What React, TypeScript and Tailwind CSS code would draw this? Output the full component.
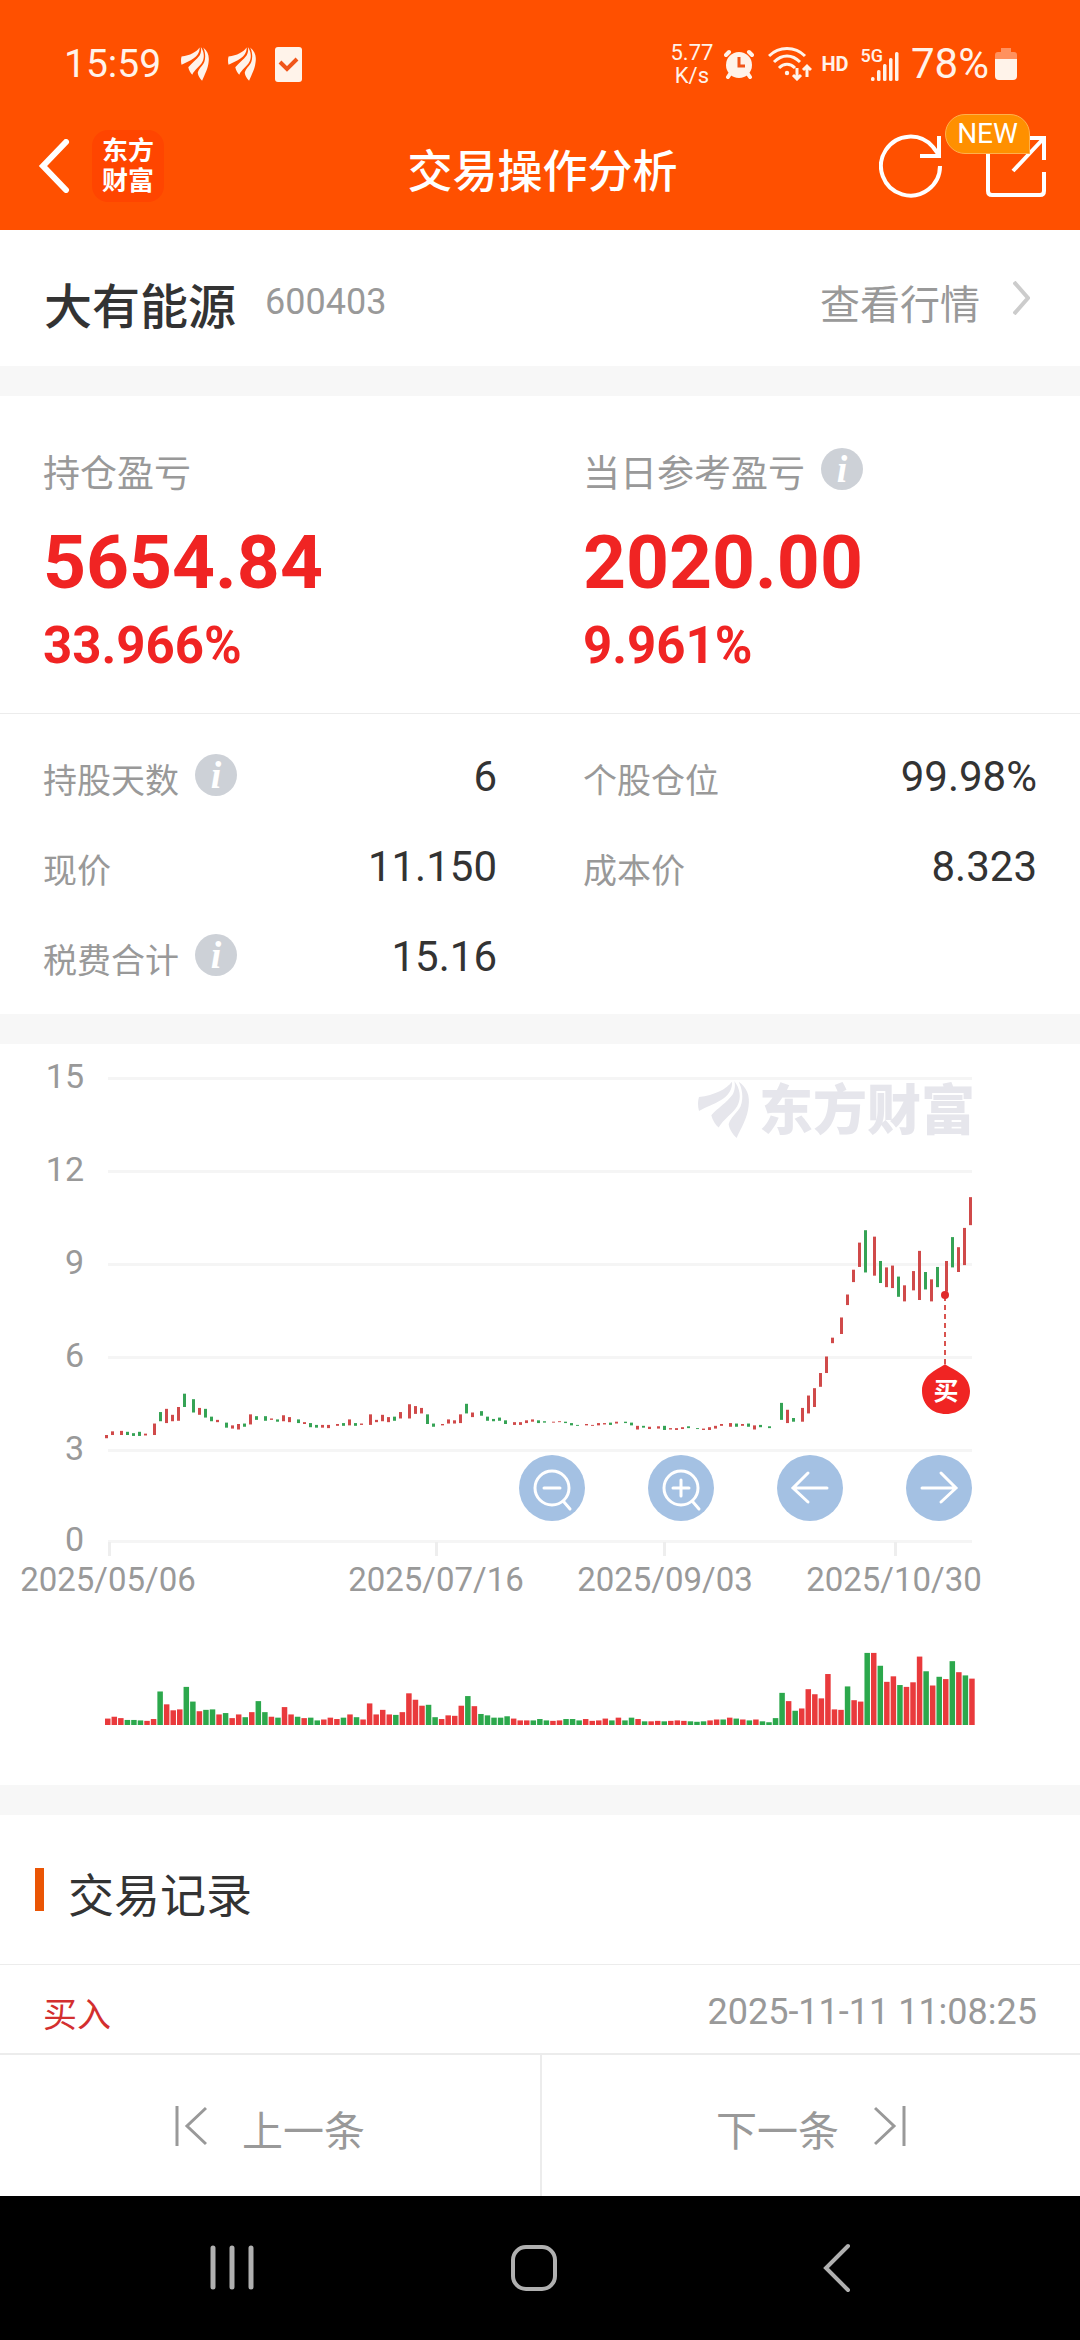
import type { ReactNode } from "react";

type Side = "r" | "g";
// price colour, top, bottom, volume, volume colour when it differs
type Bar = [Side, number, number, number, Side?];

const BARS: Bar[] = [
  ["r", 882, 889, 14], ["r", 874, 882, 18], ["r", 873, 882, 15], ["g", 875, 882, 11],
  ["g", 878, 884, 11], ["g", 875, 884, 10], ["r", 879, 883, 9], ["r", 857, 882, 13],
  ["g", 832, 852, 73], ["r", 825, 856, 45], ["r", 838, 852, 32], ["r", 821, 851, 34],
  ["g", 792, 821, 83], ["g", 804, 833, 51], ["r", 823, 838, 30], ["g", 825, 844, 33],
  ["g", 842, 852, 34], ["r", 849, 854, 23], ["g", 855, 866, 26], ["r", 861, 868, 15],
  ["r", 858, 870, 23], ["g", 857, 864, 17], ["r", 837, 859, 28], ["g", 841, 849, 52],
  ["g", 841, 851, 28], ["r", 846, 849, 18], ["g", 848, 853, 16], ["r", 839, 852, 39],
  ["r", 843, 854, 23], ["g", 848, 856, 18], ["r", 854, 858, 15], ["g", 856, 865, 16],
  ["g", 860, 866, 10], ["r", 860, 866, 12], ["r", 860, 867, 16], ["r", 858, 862, 13],
  ["g", 856, 862, 16], ["r", 848, 861, 23], ["g", 856, 862, 17], ["r", 857, 860, 12],
  ["r", 837, 860, 47], ["r", 849, 854, 23], ["r", 838, 852, 33], ["r", 843, 854, 23],
  ["g", 842, 851, 22], ["r", 832, 846, 28], ["r", 815, 846, 69], ["r", 819, 836, 55],
  ["r", 823, 835, 42], ["g", 837, 858, 44], ["g", 857, 864, 17], ["r", 858, 861, 13],
  ["r", 848, 857, 21], ["r", 850, 857, 20], ["r", 837, 856, 42], ["g", 814, 835, 63],
  ["r", 833, 843, 41], ["g", 830, 840, 24], ["g", 842, 851, 21], ["g", 847, 852, 16],
  ["g", 844, 851, 16], ["g", 850, 858, 19], ["r", 854, 860, 14], ["r", 854, 860, 10],
  ["r", 850, 856, 10], ["r", 848, 853, 10, "g"], ["g", 850, 856, 13], ["g", 852, 855, 10],
  ["r", 853, 855, 9], ["r", 852, 854, 10], ["g", 853, 856, 13], ["g", 856, 861, 13],
  ["g", 860, 862, 10], ["r", 858, 861, 13], ["r", 860, 862, 9], ["r", 856, 861, 10],
  ["r", 856, 859, 14], ["g", 855, 860, 10], ["r", 853, 857, 16], ["g", 853, 856, 10],
  ["g", 855, 861, 16], ["r", 862, 870, 13], ["g", 862, 866, 8], ["r", 864, 869, 8],
  ["r", 863, 868, 9], ["g", 862, 871, 8], ["r", 867, 870, 9], ["r", 867, 871, 10],
  ["r", 865, 869, 9], ["g", 863, 867, 8], ["g", 867, 869, 7], ["r", 868, 871, 8, "g"],
  ["r", 865, 871, 10], ["r", 862, 868, 12], ["r", 858, 862, 12, "g"], ["r", 856, 864, 16],
  ["g", 857, 864, 14], ["r", 858, 862, 12], ["g", 857, 864, 10], ["r", 861, 870, 12],
  ["g", 860, 865, 8], ["g", 863, 867, 6], ["g", 864, 864, 15], ["g", 812, 849, 70],
  ["r", 827, 856, 52], ["g", 845, 853, 31], ["r", 823, 853, 36], ["r", 796, 835, 78],
  ["r", 780, 821, 67], ["r", 747, 777, 58], ["r", 711, 747, 111], ["r", 670, 682, 34],
  ["r", 626, 662, 33], ["r", 576, 599, 84, "g"], ["r", 522, 549, 54], ["r", 463, 516, 51],
  ["g", 436, 528, 157], ["r", 450, 535, 157], ["g", 503, 551, 129], ["r", 517, 560, 94],
  ["r", 513, 562, 106], ["g", 537, 581, 87], ["r", 556, 591, 83], ["r", 525, 567, 93],
  ["r", 481, 588, 149], ["g", 527, 565, 117], ["r", 543, 591, 86], ["g", 516, 560, 105],
  ["r", 503, 570, 100], ["g", 451, 517, 139], ["r", 473, 527, 115], ["r", 431, 512, 108, "g"],
  ["r", 364, 425, 101],
];

const UNIT = 0.4592;
const priceY = (v: number) => v * UNIT - 14;
const candleX = (i: number) => 105 + 3 * Math.floor(i * 2.1818 + 0.78);
const volumeX = (i: number) => 105 + i * 6.547;

const GRID = [
  { label: "15", y: 34 },
  { label: "12", y: 127 },
  { label: "9", y: 220 },
  { label: "6", y: 313 },
  { label: "3", y: 406 },
  { label: "0", y: 497 },
];

const DATES = [
  { label: "2025/05/06", x: 108, tick: 110 },
  { label: "2025/07/16", x: 436, tick: 437 },
  { label: "2025/09/03", x: 665, tick: 665 },
  { label: "2025/10/30", x: 894, tick: 896 },
];

const WingShape = () => (
  <>
    <path d="M3 48 C50 42 85 25 102 2 C105 20 92 45 68 58 C50 70 25 78 3 90 C-1 75 -1 60 3 48 Z" />
    <path d="M40 103 C60 80 85 66 103 42 C112 28 112 10 109 0 C125 20 132 50 118 75 C105 98 75 115 62 140 C52 132 44 118 40 103 Z" />
    <path d="M92 130 C100 105 118 97 128 76 C138 50 132 20 122 2 C148 20 156 45 152 75 C149 110 130 140 116 171 C104 160 94 145 92 130 Z" />
  </>
);

const Wing = () => (
  <svg viewBox="0 0 154 172" className="h-[34px] w-[28px]" preserveAspectRatio="none" fill="#fff3ea">
    <WingShape />
  </svg>
);

const StatusBar = () => (
  <div className="flex h-[115px] items-center justify-between pt-[13px] pr-[63px] pl-[64px] text-[#fff3ea]">
    <div className="flex items-center">
      <span className="text-[39px] leading-none">15:59</span>
      <div className="ml-5 flex items-center gap-[19px]">
        <Wing />
        <Wing />
        <svg viewBox="0 0 27 35" className="h-[35px] w-[27px]">
          <rect width="27" height="35" rx="3" fill="#fff3ea" />
          <path d="M5 15 L12 22 L22 12" fill="none" stroke="#f0551a" strokeWidth="4" />
        </svg>
      </div>
    </div>
    <div className="flex items-center">
      <div className="text-center text-[22px] leading-[23px]">
        <div>5.77</div>
        <div>K/s</div>
      </div>
      <svg viewBox="0 0 30 30" className="ml-[11px] h-[30px] w-[30px]">
        <circle cx="15" cy="16" r="13" fill="currentColor" />
        <g fill="none" stroke="currentColor" strokeWidth="4" strokeLinecap="round">
          <path d="M2 6 L5 3 M28 6 L25 3 M6 25 L4 28 M24 25 L26 28" />
        </g>
        <path d="M15 8 V17 H21" fill="none" stroke="#f0551a" strokeWidth="3" />
      </svg>
      <svg viewBox="0 0 44 34" className="ml-[14px] h-[34px] w-[44px]" fill="none" stroke="currentColor">
        <path d="M1 9 C11 -1 27 -1 37 9 M6 15 C14 7 24 7 32 15 M11 21 C16 16 22 16 27 21" strokeWidth="3" />
        <circle cx="19" cy="26" r="2.2" fill="currentColor" stroke="none" />
        <path d="M29 21 V32 M25 28 L29 32 L33 28 M39 30 V19 M35 23 L39 19 L43 23" strokeWidth="3" />
      </svg>
      <span className="ml-[9px] text-[20px] leading-none font-bold">HD</span>
      <div className="ml-[12px] flex h-[34px] items-start">
        <span className="-mr-3 text-[18px] leading-[18px] font-medium">5G</span>
        <svg viewBox="0 0 28 34" className="h-[34px] w-[28px]" fill="currentColor">
          <rect x="0" y="30" width="3.5" height="4" rx="1.5" />
          <rect x="6" y="23" width="3.5" height="11" rx="1.5" />
          <rect x="12" y="17" width="3.5" height="17" rx="1.5" />
          <rect x="18" y="11" width="3.5" height="23" rx="1.5" />
          <rect x="24" y="5" width="3.5" height="29" rx="1.5" />
        </svg>
      </div>
      <span className="ml-3 text-[42px] leading-none">78%</span>
      <svg viewBox="0 0 22 32" className="ml-1.5 h-[32px] w-[22px]" fill="currentColor">
        <path d="M6 0 H16 V4 H19 Q22 4 22 7 V11 H0 V7 Q0 4 3 4 H6 Z" opacity="0.4" />
        <path d="M0 11 H22 V28 Q22 32 18 32 H4 Q0 32 0 28 Z" />
      </svg>
    </div>
  </div>
);

const NavBar = () => (
  <div className="grid h-[115px] grid-cols-[1fr_auto_1fr] items-center pr-[33px] pb-[14px] pl-[38px]">
    <div className="flex items-center gap-[22px]">
      <button type="button" aria-label="返回">
        <svg viewBox="0 0 32 54" className="h-[54px] w-[32px]" fill="none" stroke="#fff" strokeWidth="6">
          <path d="M28 3 L5 27 L28 51" strokeLinecap="round" />
        </svg>
      </button>
      <button
        type="button"
        className="h-[72px] w-[72px] rounded-2xl bg-[#ff4500] text-[26px] leading-[30px] font-bold text-white"
      >
        东方
        <br />
        财富
      </button>
    </div>
    <h1 className="pt-[14px] text-[45px] font-medium text-white">交易操作分析</h1>
    <div className="flex items-center justify-end gap-[42px]">
      <button type="button" aria-label="刷新">
        <svg viewBox="0 0 64 64" className="h-[64px] w-[64px]" fill="none" stroke="#fff" strokeWidth="4">
          <path d="M61 32 A29.5 29.5 0 1 1 54 13 L60 21" />
          <path d="M60 2 V22 H41" />
        </svg>
      </button>
      <button type="button" aria-label="分享" className="relative">
        <svg viewBox="0 0 62 64" className="h-[64px] w-[62px]" fill="none" stroke="#fff" strokeWidth="4">
          <path d="M3 12 V57 Q3 61 7 61 H55 Q59 61 59 57 V38" />
          <path d="M36 4 H59 V26 M59 4 L28 37" />
        </svg>
        <span className="absolute -top-[20px] -left-[40px] flex h-[40px] w-[85px] items-center justify-center rounded-[20px] rounded-br-none border border-[#ffb04d] bg-[#ff9000] text-[28px] text-white">
          NEW
        </span>
      </button>
    </div>
  </div>
);

const InfoButton = ({ label }: { label: string }) => (
  <button
    type="button"
    aria-label={`${label}说明`}
    className="mb-[12px] ml-4 flex h-[42px] w-[42px] items-center justify-center rounded-full bg-[#cdd1d7] font-['Liberation_Serif'] text-[38px] leading-none font-bold text-white italic"
  >
    i
  </button>
);

interface ProfitProps {
  label: string;
  amount: string;
  rate: string;
  info?: boolean;
}

const Profit = ({ label, amount, rate, info }: ProfitProps) => (
  <div className="px-[43px]">
    <div className="flex h-[52px] items-center text-[37px] text-[#999]">
      {label}
      {info && <InfoButton label={label} />}
    </div>
    <div className="mt-4 text-[75px] leading-[90px] font-bold">{amount}</div>
    <div className="mt-[9px] text-[51px] leading-[60px] font-bold">{rate}</div>
  </div>
);

interface StatProps {
  label: string;
  value: string;
  info?: boolean;
}

const Stat = ({ label, value, info }: StatProps) => (
  <div className="flex h-[90px] items-center justify-between px-[43px]">
    <dt className="flex h-[52px] items-center pt-2 text-[34px] text-[#999]">
      {label}
      {info && <InfoButton label={label} />}
    </dt>
    <dd className="pb-0.5 text-[42px] text-[#333]">{value}</dd>
  </div>
);

const RoundButton = ({ label, children }: { label: string; children: ReactNode }) => (
  <button type="button" aria-label={label} className="h-[66px] w-[66px] rounded-full bg-[#a4c1e3]">
    <svg viewBox="0 0 66 66" className="h-full w-full" fill="none" stroke="#fff" strokeWidth="3" strokeLinecap="round">
      {children}
    </svg>
  </button>
);

const PriceChart = () => (
  <section className="relative">
    <svg viewBox="0 0 1080 741" className="block h-auto w-full">
      {GRID.map((line) => (
        <g key={line.label}>
          <rect x="108" y={line.y - 1} width="864" height="3" fill="#f5f5f5" />
          <text x="84" y={line.y + 10} textAnchor="end" fontSize="34" fill="#999">
            {line.label}
          </text>
        </g>
      ))}
      {DATES.map((d) => (
        <g key={d.label}>
          <rect x={d.tick - 2} y="498" width="3" height="14" fill="#eee" />
          <text x={d.x} y="547" textAnchor="middle" fontSize="33" fill="#999">
            {d.label}
          </text>
        </g>
      ))}

      <g fill="#e6e6ec">
        <g transform="translate(698 37) scale(0.333)">
          <WingShape />
        </g>
        <text x="759" y="86" fontSize="54" fontWeight="900">
          东方财富
        </text>
      </g>

      {BARS.map(([side, top, bottom, volume, volumeSide], i) => (
        <g key={i}>
          <rect
            x={candleX(i)}
            y={priceY(top)}
            width="3"
            height={(bottom - top) * UNIT}
            fill={side === "r" ? "#d04a4a" : "#35a355"}
          />
          <rect
            x={volumeX(i)}
            y={681 - volume * UNIT}
            width="5.5"
            height={volume * UNIT}
            fill={(volumeSide ?? side) === "r" ? "#e93a3c" : "#2ca84c"}
          />
        </g>
      ))}

      <path d="M945 252 V320" stroke="#d9534f" strokeWidth="2" strokeDasharray="5 4" />
      <circle cx="945" cy="251" r="4" fill="#e02b2b" />
      <path
        d="M945 320 C950 325 970 329 970 347 C970 361 959 370 946 370 C933 370 922 361 922 347 C922 329 940 325 945 320 Z"
        fill="#f02423"
      />
      <text x="946" y="356" textAnchor="middle" fontSize="25" fontWeight="700" fill="#fff">
        买
      </text>
    </svg>

    <div className="absolute top-[411px] right-[10%] flex gap-[63px]">
      <RoundButton label="缩小">
        <circle cx="33" cy="33" r="17" />
        <path d="M25 33 H41 M45 47 L51 54" />
      </RoundButton>
      <RoundButton label="放大">
        <circle cx="33" cy="33" r="17" />
        <path d="M25 33 H41 M33 25 V41 M45 47 L51 54" />
      </RoundButton>
      <RoundButton label="左移">
        <path d="M16 33 H50 M31 18 L16 33 L31 47" />
      </RoundButton>
      <RoundButton label="右移">
        <path d="M16 33 H50 M35 18 L50 33 L35 47" />
      </RoundButton>
    </div>
  </section>
);

const Gap = () => <div className="h-[30px] bg-[#f7f7f7]" />;

export default function App() {
  return (
    <div className="min-h-screen bg-white font-[Roboto,'Noto_Sans_CJK_SC',sans-serif]">
      <header className="bg-[#ff5000]">
        <StatusBar />
        <NavBar />
      </header>

      <main>
        <section className="flex h-[136px] items-center justify-between pr-[50px] pl-[44px]">
          <div className="flex items-center gap-[29px]">
            <h2 className="pt-5 text-[48px] font-medium text-[#333]">大有能源</h2>
            <span className="pt-2 text-[36px] text-[#999]">600403</span>
          </div>
          <a href="#quote" className="flex items-center gap-[33px] text-[40px] text-[#999]">
            <span className="pt-4">查看行情</span>
            <svg viewBox="0 0 17 34" className="h-[34px] w-[17px]" fill="none" stroke="#ccc" strokeWidth="4">
              <path d="M1 1 L15 17 L1 33" />
            </svg>
          </a>
        </section>

        <Gap />

        <section className="grid grid-cols-2 border-b border-[#ececec] pt-[53px] pb-[37px] text-[#f02423]">
          <Profit label="持仓盈亏" amount="5654.84" rate="33.966%" />
          <Profit label="当日参考盈亏" amount="2020.00" rate="9.961%" info />
        </section>

        <dl className="grid grid-cols-2 pt-[18px] pb-[12px]">
          <Stat label="持股天数" value="6" info />
          <Stat label="个股仓位" value="99.98%" />
          <Stat label="现价" value="11.150" />
          <Stat label="成本价" value="8.323" />
          <Stat label="税费合计" value="15.16" info />
        </dl>

        <Gap />
        <PriceChart />
        <Gap />

        <section>
          <div className="flex h-[150px] items-center border-b border-[#ececec] pl-[35px]">
            <span className="h-[43px] w-[9px] bg-[#ea5504]" />
            <h2 className="ml-6 pt-[14px] text-[46px] text-[#333]">交易记录</h2>
          </div>
          <div className="flex h-[88px] items-center justify-between px-[43px]">
            <span className="pt-3 text-[34px] text-[#d32f2f]">买入</span>
            <time className="pt-1.5 text-[36px] text-[#999]">2025-11-11 11:08:25</time>
          </div>
        </section>
      </main>

      <footer>
        <div className="grid h-[143px] grid-cols-2 border-t-2 border-[#ececec] text-[41px] text-[#999]">
          <button type="button" className="flex items-center justify-center gap-[35px]">
            <svg viewBox="0 0 32 42" className="h-[42px] w-[32px]" fill="none" stroke="currentColor" strokeWidth="3">
              <path d="M2 1 V41 M31 3 L12 21 L31 39" />
            </svg>
            <span className="pt-[14px]">上一条</span>
          </button>
          <button type="button" className="flex items-center justify-center gap-[35px] border-l-2 border-[#ececec]">
            <span className="pt-[14px]">下一条</span>
            <svg viewBox="0 0 32 42" className="h-[42px] w-[32px]" fill="none" stroke="currentColor" strokeWidth="3">
              <path d="M30 1 V41 M1 3 L20 21 L1 39" />
            </svg>
          </button>
        </div>
        <nav className="flex h-[144px] items-center justify-between bg-black pr-[229px] pl-[209px]">
          <button type="button" aria-label="最近任务">
            <svg viewBox="0 0 46 48" className="h-[48px] w-[46px]" stroke="#b0b0b0" strokeWidth="5" strokeLinecap="round">
              <path d="M4 4 V43 M23 4 V43 M42 4 V43" />
            </svg>
          </button>
          <button type="button" aria-label="主屏幕" className="pr-[10px]">
            <svg viewBox="0 0 48 48" className="h-[48px] w-[48px]" fill="none" stroke="#b0b0b0" strokeWidth="4">
              <rect x="3" y="3" width="42" height="42" rx="13" />
            </svg>
          </button>
          <button type="button" aria-label="后退">
            <svg viewBox="0 0 28 50" className="h-[50px] w-[28px]" fill="none" stroke="#b0b0b0" strokeWidth="4" strokeLinecap="round">
              <path d="M25 3 L3 25 L25 47" />
            </svg>
          </button>
        </nav>
      </footer>
    </div>
  );
}
